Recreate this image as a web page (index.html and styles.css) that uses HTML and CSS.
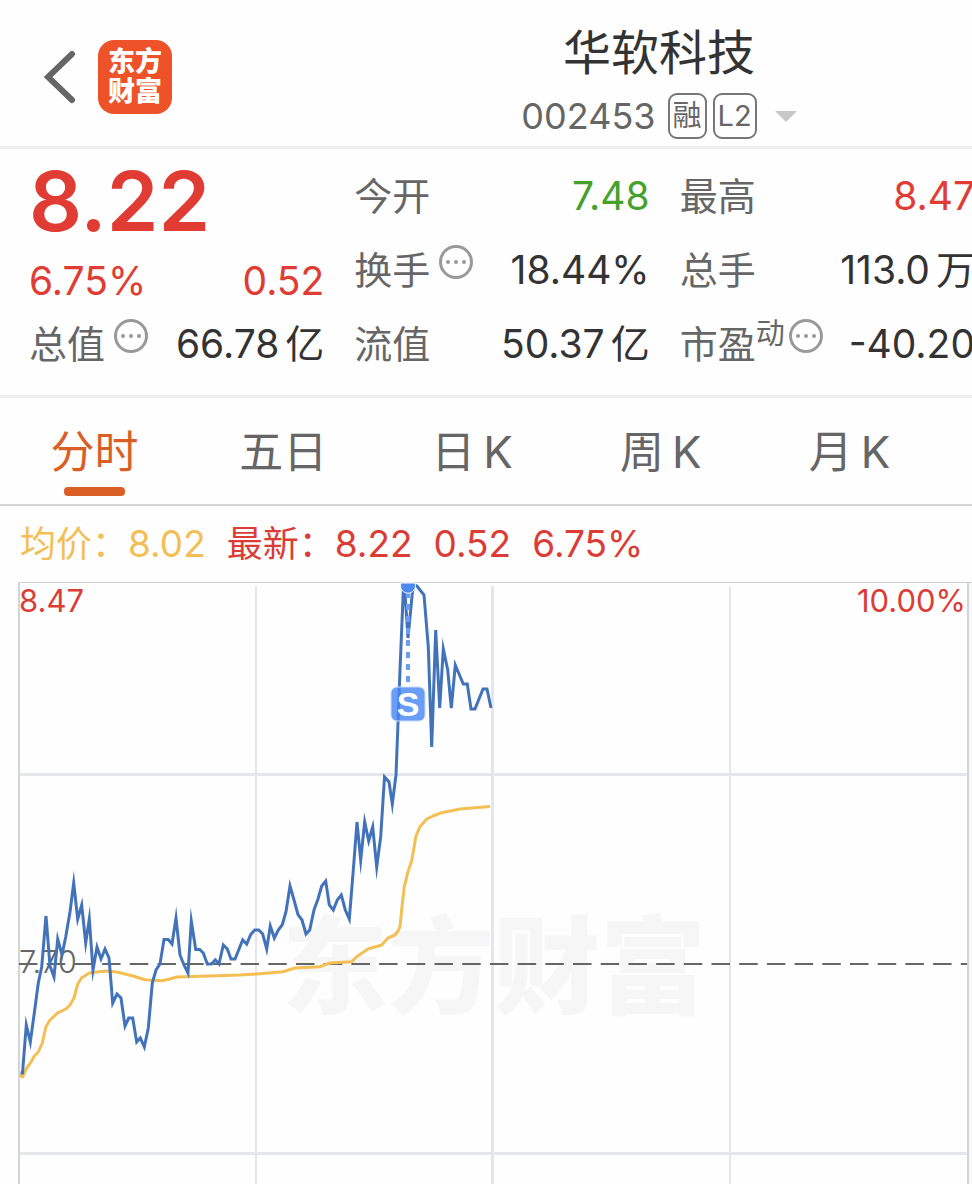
FILE: index.html
```html
<!DOCTYPE html>
<html lang="zh-CN">
<head>
    <meta charset="UTF-8">
    <meta name="viewport" content="width=device-width, initial-scale=1.0">
    <title>华软科技 002453</title>
    <link rel="stylesheet" href="styles.css">
</head>
<body>
    <!-- Header -->
    <header class="header">
        <div class="header-left">
            <button class="back-button" aria-label="返回">
                <svg width="34" height="56" viewBox="0 0 34 56">
                    <path d="M28 5L4 28L28 51" fill="none" stroke="#666" stroke-width="6" stroke-linecap="round"/>
                </svg>
            </button>
            <a class="logo" href="#"><span>东方</span><span>财富</span></a>
        </div>
        <div class="header-title">
            <h1 class="stock-name">华软科技</h1>
            <button class="stock-code">
                <span>002453</span>
                <span class="badges">
                    <span class="badge">融</span>
                    <span class="badge">L2</span>
                </span>
                <span class="caret"></span>
            </button>
        </div>
    </header>

    <!-- Quote -->
    <section class="quote">
        <div class="quote-column">
            <div class="price">8.22</div>
            <div class="change"><span>6.75%</span><span>0.52</span></div>
            <div class="quote-row">
                <span class="label">总值</span>
                <button class="info" aria-label="总值说明"><i></i><i></i><i></i></button>
                <span class="value">66.78<span class="unit">亿</span></span>
            </div>
        </div>
        <div class="quote-column">
            <div class="quote-row">
                <span class="label">今开</span>
                <span class="value down">7.48</span>
            </div>
            <div class="quote-row">
                <span class="label">换手</span>
                <button class="info" aria-label="换手说明"><i></i><i></i><i></i></button>
                <span class="value">18.44%</span>
            </div>
            <div class="quote-row">
                <span class="label">流值</span>
                <span class="value">50.37<span class="unit">亿</span></span>
            </div>
        </div>
        <div class="quote-column">
            <div class="quote-row">
                <span class="label">最高</span>
                <span class="value up">8.47</span>
            </div>
            <div class="quote-row">
                <span class="label">总手</span>
                <span class="value">113.0<span class="unit">万</span></span>
            </div>
            <div class="quote-row">
                <span class="label">市盈</span>
                <span class="label-mark">动</span>
                <button class="info info-tight" aria-label="市盈说明"><i></i><i></i><i></i></button>
                <span class="value">-40.20</span>
            </div>
        </div>
    </section>

    <!-- Period tabs -->
    <nav class="tabs">
        <button class="tab active">分时</button>
        <button class="tab">五日</button>
        <button class="tab">日&thinsp;K</button>
        <button class="tab">周&thinsp;K</button>
        <button class="tab">月&thinsp;K</button>
    </nav>

    <!-- Legend -->
    <div class="legend">
        <span class="legend-avg"><span class="legend-name">均价：</span>8.02</span>
        <span class="legend-last"><span class="legend-name">最新：</span>8.22</span>
        <span class="legend-last">0.52</span>
        <span class="legend-last">6.75%</span>
    </div>

    <!-- Intraday chart -->
    <svg class="chart" viewBox="0 582 972 602" role="img" aria-label="分时走势">
        <text class="watermark" x="282" y="1005">东方财富</text>

        <g class="grid">
            <path d="M256 586V1184M730 586V1184" stroke-width="2"/>
            <path d="M492.5 586V1184M20 774.500H967M20 1153.500H967" stroke-width="3"/>
        </g>
        <rect class="outside" x="969" y="583" width="3" height="601"/>
        <path class="frame-top" d="M18 582.500H972"/>
        <path class="frame" d="M19 582V1184M968 582V1184"/>

        <path class="base-line" d="M19 964H967"/>
        <text class="base-label" x="19" y="973">7.70</text>
        <text class="axis-label" x="19" y="612">8.47</text>
        <text class="axis-label" x="966" y="612" text-anchor="end">10.00%</text>

        <polyline class="avg-line" points="20,1075 22.5,1077 26.700,1068 30.700,1062.700 34.300,1056 38.300,1052 42.300,1043 44,1035 46,1026.700 50,1020 58,1012.700 66,1009 70,1005 74,998 77.700,984 81.700,977.700 89.300,973 97,972 106.700,971 116.700,972 125,974 133,976 145,979.700 161.700,980.700 170,979 176.700,977 216.700,975.700 240,975 260,973.700 283,971.700 295,968 320,966.700 330,963 351.700,961.700 356.700,956.700 368,949 381.700,945 388,938 395,935 398,931 400,926.700 402,906.700 404.300,886.700 408,871.700 411.700,860.700 416,836 420,826.700 426.700,819 433,816 441.700,812.700 460,809 490,806.500"/>
        <polyline class="price-line" points="20.5,1073 22.5,1073 26.300,1025 30.300,1042 34.300,1013 38.300,983 41.700,967 46,916 50,966 54,977 57.700,939 62,955 65.700,937 70,912 73.700,883 77.700,919 81.700,905 85.700,943 89.300,919 93,970 97,947 101,959 105,949 109,958 112.700,1003 117,994 121,998 125,1026 128.700,1018 132.700,1018 136.700,1042 140.300,1038 144.300,1047 148.300,1028 152.300,983 156,970 160,964 164,939.500 168.300,939.500 172,944 176,918 180,955 184,965 188,973 191.300,921 195.700,949.500 199.700,949.500 203.300,953 207.300,964 211.300,964 215.300,960 219,964 223.300,945 227.300,949 231,959 235,959 242.700,940 246.700,944 250.700,934.500 254.700,930 258.700,930 262.700,934 266.700,949 270.300,926 274.300,938 278.300,930 282.300,924.700 286,911.700 290,886 294,900 298,914.700 302,920 306,934 309.700,930 314,910 318,899 321.700,886 325.700,881 329.300,905 333.300,910 337.300,900 341.300,895 345.300,910 349.300,919 353.300,870 357,822 360.700,860 364.700,822 368.700,841 372.700,827 376.700,867 380.700,836.700 384.500,777 389,782 392.300,804 396,775 398,723 400,670 403.500,586 404.500,586 408,638 412.300,593 414,585 417,586 424,595 428.300,647 431.700,747 435.700,630 439.700,708 443.300,649 447.700,670 451.300,708 455.300,665 463.300,684 467.300,684 471,709 475,709 483,689 487,689 491,708"/>

        <!-- Sell marker -->
        <path class="marker-line" d="M408 592V687"/>
        <path class="marker-dot" d="M401 583A7.500 7.500 0 1 0 415 583Z"/>
        <rect class="marker-box" x="391" y="687" width="34" height="34" rx="6"/>
        <text class="marker-text" x="408" y="716" text-anchor="middle">S</text>
    </svg>
</body>
</html>
```
FILE: styles.css
```css
/* Global Styles */
* {
    box-sizing: border-box;
}

body {
    margin: 0;
    background-color: #fefefe;
    color: #333;
    font-family: Inter, "Noto Sans CJK SC", sans-serif;
    overflow-x: hidden;
}

button {
    padding: 0;
    border: none;
    background: none;
    color: inherit;
    font: inherit;
    cursor: pointer;
}

/* Header */
.header {
    display: grid;
    grid-template-columns: 346px 1fr;
    border-bottom: 3px solid #eee;
}

.header-left {
    display: flex;
    align-items: center;
    gap: 20px;
    padding: 8px 0 0 44px;
}

.back-button {
    display: flex;
}

.logo {
    display: flex;
    flex-direction: column;
    align-items: center;
    justify-content: center;
    width: 74px;
    height: 74px;
    border-radius: 16px;
    background-color: #ed5228;
    color: #fff;
    font-size: 27px;
    font-weight: 900;
    line-height: 30px;
    text-decoration: none;
}

.header-title {
    display: flex;
    flex-direction: column;
    align-items: center;
    padding-top: 20px;
}

.stock-name {
    margin: 0;
    font-size: 48px;
    font-weight: 400;
    line-height: 66px;
}

.stock-code {
    display: flex;
    align-items: center;
    height: 60px;
    color: #666;
    font-size: 36px;
}

.badges {
    display: flex;
    gap: 6px;
    margin: 0 18px 0 12px;
}

.badge {
    height: 46px;
    padding: 0 3px;
    border: 2px solid #777;
    border-radius: 9px;
    font-size: 29px;
    line-height: 42px;
}

.caret {
    border: 11px solid transparent;
    border-top-color: #c8c8c8;
    border-bottom: none;
}

/* Quote */
.quote {
    display: grid;
    grid-template-columns: repeat(3, 1fr);
    gap: 30px;
    margin-right: -3px;
    padding: 10px 0 14px 29px;
    border-bottom: 3px solid #eee;
    font-size: 38px;
}

.price {
    color: #e13c34;
    font-size: 83px;
    font-weight: 600;
    line-height: 84px;
}

.change {
    display: flex;
    justify-content: space-between;
    margin-top: 12px;
    color: #e13c34;
    font-size: 39px;
    line-height: 52px;
}

.quote-row {
    display: flex;
    align-items: center;
    height: 74px;
    line-height: 54px;
    white-space: nowrap;
}

.label {
    color: #666;
}

.label-mark {
    align-self: flex-start;
    color: #666;
    font-size: 29px;
}

.value {
    margin-left: auto;
    font-size: 39px;
}

.unit {
    margin-left: 6px;
}

.up {
    color: #e13c34;
}

.down {
    color: #45a12c;
}

.info {
    display: flex;
    align-items: center;
    align-self: flex-start;
    justify-content: center;
    gap: 4px;
    width: 34px;
    height: 34px;
    margin: 12px 0 0 9px;
    border: 3px solid #999;
    border-radius: 50%;
}

.info-tight {
    margin-left: 4px;
}

.info i {
    width: 4px;
    height: 4px;
    border-radius: 50%;
    background-color: #999;
}

/* Tabs */
.tabs {
    display: grid;
    grid-template-columns: repeat(5, 1fr);
    padding-right: 28px;
    border-bottom: 2px solid #d5d5d5;
}

.tab {
    display: flex;
    flex-direction: column;
    align-items: center;
    height: 106px;
    padding-top: 22px;
    color: #666;
    font-size: 44px;
    line-height: 64px;
}

.tab.active {
    color: #d95f26;
}

.tab.active::after {
    content: "";
    width: 61px;
    height: 9px;
    margin-top: 3px;
    border-radius: 4px;
    background-color: #d95f26;
}

/* Legend */
.legend {
    display: flex;
    gap: 21px;
    padding: 12px 20px;
    font-size: 37px;
    line-height: 52px;
}

.legend-name {
    font-size: 36px;
}

.legend-avg {
    color: #f3bf55;
}

.legend-last {
    color: #dc3c36;
}

/* Chart */
.chart {
    display: block;
    width: 100%;
    height: auto;
}

.grid {
    fill: none;
    stroke: #e5e6eb;
}

.frame {
    stroke: #d2d4d8;
    stroke-width: 2;
}

.frame-top {
    stroke: #cdd0d3;
    stroke-width: 1;
}

.outside {
    fill: #f7f8fa;
}

.watermark {
    fill: #f6f6f6;
    font-size: 106px;
    font-weight: 900;
}

.base-line {
    stroke: #666;
    stroke-width: 2;
    stroke-dasharray: 18.500 9.200;
}

.base-label {
    fill: #666;
    font-size: 31px;
    font-weight: 300;
}

.axis-label {
    fill: #dc3c36;
    font-size: 31px;
}

.price-line,
.avg-line {
    fill: none;
    stroke-width: 3;
}

.price-line {
    stroke: #4273ba;
    stroke-miterlimit: 10;
}

.avg-line {
    stroke: #f3bf55;
    stroke-linejoin: round;
}

.marker-line {
    stroke: #6b9df5;
    stroke-width: 4;
    stroke-dasharray: 6 6;
}

.marker-dot {
    fill: #4d88ee;
    stroke: #fefefe;
    stroke-width: 1;
}

.marker-box {
    fill: #4585f5;
    fill-opacity: 0.8;
    stroke: #c9dcfb;
    stroke-width: 1;
}

.marker-text {
    fill: #fff;
    font-family: "Liberation Sans", sans-serif;
    font-size: 34px;
    font-weight: 700;
}
```
